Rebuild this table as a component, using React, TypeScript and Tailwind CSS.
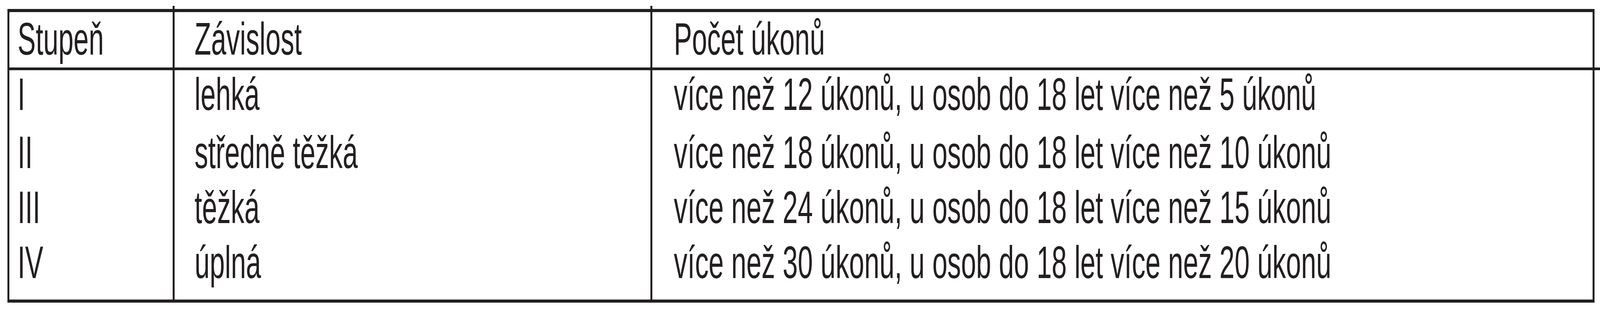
// Reference is 6831px wide; the page is photographed at 4096px, so widths are scaled by 0.6
// and the glyphs are squeezed horizontally to keep the reference's proportions.
const rows = [
  { stupen: 'I', zavislost: 'lehká', pocet: 'více než 12 úkonů, u osob do 18 let více než 5 úkonů', h: 'h-[153px] pt-[4px]' },
  { stupen: 'II', zavislost: 'středně těžká', pocet: 'více než 18 úkonů, u osob do 18 let více než 10 úkonů', h: 'h-[141px]' },
  { stupen: 'III', zavislost: 'těžká', pocet: 'více než 24 úkonů, u osob do 18 let více než 15 úkonů', h: 'h-[141px]' },
  { stupen: 'IV', zavislost: 'úplná', pocet: 'více než 30 úkonů, u osob do 18 let více než 20 úkonů', h: 'h-[153px]' },
]

function Txt({ children }: { children: string }) {
  return <span className="inline-block origin-left scale-x-[0.6] whitespace-nowrap">{children}</span>
}

export default function App() {
  return (
    <div
      className="min-h-screen w-full overflow-hidden bg-white pt-[23px] pl-[19px] text-[116px] leading-none text-[#231f20]"
      style={{ fontFamily: '"Liberation Sans", Arial, sans-serif' }}
    >
      <div className="grid w-[4063px] grid-cols-[423px_1223px_1fr] border-x-[5px] border-y-[8px] border-[#231f20]">
        {/* Header */}
        <div className="relative h-[149px] border-r-[5px] border-b-[7px] border-[#231f20] pl-[21px] pt-[11px]">
          <Txt>Stupeň</Txt>
          <span className="absolute -top-[16px] -right-[5px] h-[8px] w-[5px] bg-[#231f20]" />
        </div>
        <div className="relative h-[149px] border-r-[5px] border-b-[7px] border-[#231f20] pl-[51px] pt-[11px]">
          <Txt>Závislost</Txt>
          <span className="absolute -top-[16px] -right-[5px] h-[8px] w-[5px] bg-[#231f20]" />
        </div>
        <div className="h-[149px] border-b-[7px] border-[#231f20] pl-[55px] pt-[11px]">
          <Txt>Počet úkonů</Txt>
        </div>

        {/* Body */}
        {rows.map((r) => (
          <div key={r.stupen} className="contents">
            <div className={`${r.h} border-r-[5px] border-[#231f20] pl-[21px]`}>
              <Txt>{r.stupen}</Txt>
            </div>
            <div className={`${r.h} border-r-[5px] border-[#231f20] pl-[51px]`}>
              <Txt>{r.zavislost}</Txt>
            </div>
            <div className={`${r.h} pl-[55px]`}>
              <Txt>{r.pocet}</Txt>
            </div>
          </div>
        ))}
      </div>
    </div>
  )
}
